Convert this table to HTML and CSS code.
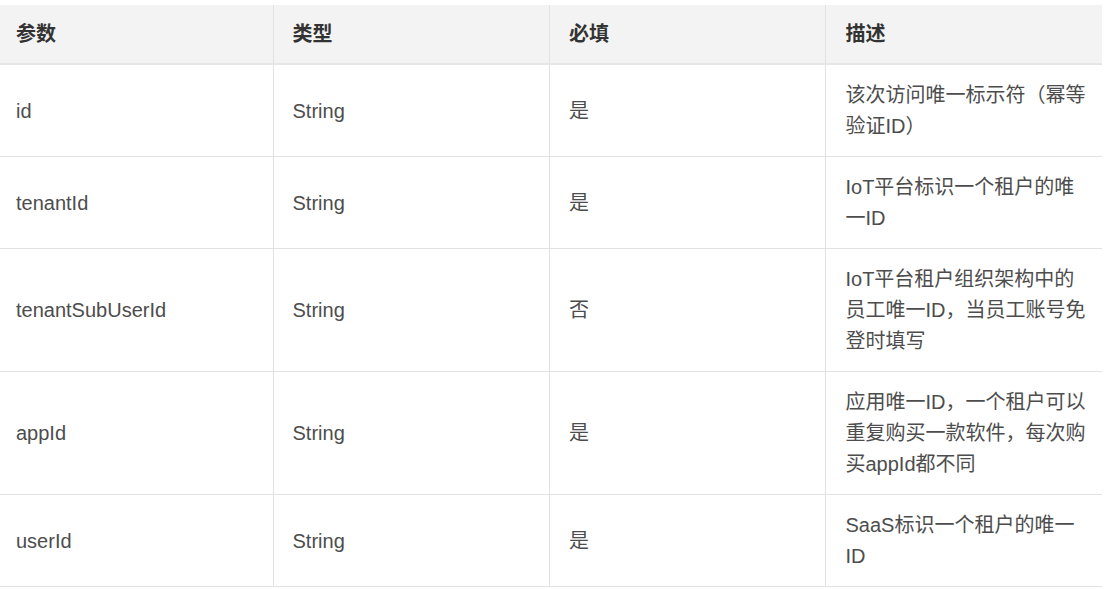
FILE: index.html
```html
<!DOCTYPE html>
<html lang="zh-CN">
<head>
<meta charset="utf-8">
<title>参数表</title>
<link rel="stylesheet" href="styles.css">
</head>
<body>
<table class="params">
  <thead>
    <tr>
      <th>参数</th>
      <th>类型</th>
      <th>必填</th>
      <th>描述</th>
    </tr>
  </thead>
  <tbody>
    <tr>
      <td>id</td>
      <td>String</td>
      <td>是</td>
      <td class="desc">该次访问唯一标示符（幂等<br>验证ID）</td>
    </tr>
    <tr>
      <td>tenantId</td>
      <td>String</td>
      <td>是</td>
      <td class="desc">IoT平台标识一个租户的唯<br>一ID</td>
    </tr>
    <tr>
      <td>tenantSubUserId</td>
      <td>String</td>
      <td>否</td>
      <td class="desc">IoT平台租户组织架构中的<br>员工唯一ID，当员工账号免<br>登时填写</td>
    </tr>
    <tr>
      <td>appId</td>
      <td>String</td>
      <td>是</td>
      <td class="desc">应用唯一ID，一个租户可以<br>重复购买一款软件，每次购<br>买appId都不同</td>
    </tr>
    <tr>
      <td>userId</td>
      <td>String</td>
      <td>是</td>
      <td class="desc">SaaS标识一个租户的唯一<br>ID</td>
    </tr>
  </tbody>
</table>
</body>
</html>
```

FILE: styles.css
```css
html, body {
  margin: 0;
  padding: 0;
  background: #ffffff;
}

body {
  font-family: "Liberation Sans", "Noto Sans CJK SC", sans-serif;
  font-size: 20px;
  color: #4d4d4d;
}

.params {
  border-collapse: collapse;
  table-layout: fixed;
  width: 1105px;
  margin: 5px 0 0 -3px;
}

.params th,
.params td {
  width: 25%;
  padding: 15px 19px 14px 19px;
  line-height: 31px;
  text-align: left;
  vertical-align: middle;
  border-bottom: 1px solid #e2e2e2;
  border-left: 1px solid #e2e2e2;
}

.params th:first-child,
.params td:first-child {
  border-left: none;
}

.params th {
  background: #f3f3f3;
  color: #333333;
  font-weight: bold;
  padding-top: 14px;
  padding-bottom: 13px;
  border-bottom: 2px solid #e6e6e6;
}

.params td.desc {
  white-space: nowrap;
}
```
